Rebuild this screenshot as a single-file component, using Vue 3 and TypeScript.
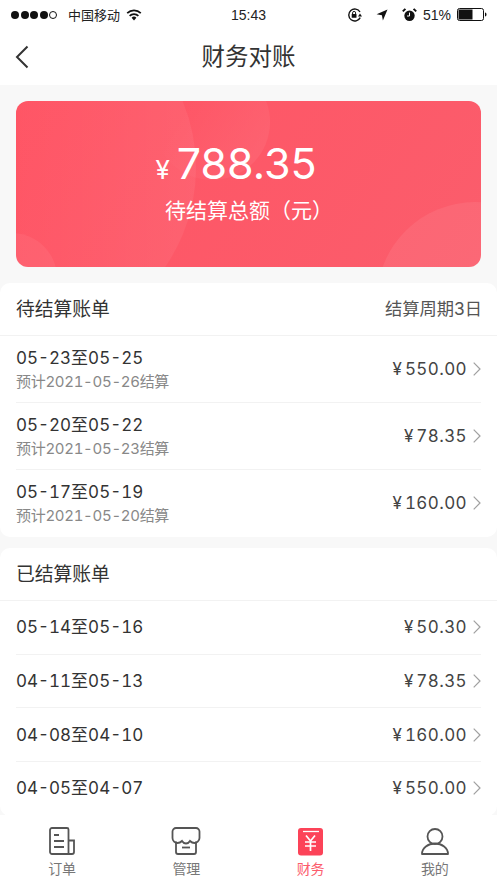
<script setup lang="ts">
interface Row { range: string; note?: string; amount: string }
const pending: Row[] = [
  { range: '05-23至05-25', note: '预计2021-05-26结算', amount: '550.00' },
  { range: '05-20至05-22', note: '预计2021-05-23结算', amount: '78.35' },
  { range: '05-17至05-19', note: '预计2021-05-20结算', amount: '160.00' },
]
const settled: Row[] = [
  { range: '05-14至05-16', amount: '50.30' },
  { range: '04-11至05-13', amount: '78.35' },
  { range: '04-08至04-10', amount: '160.00' },
  { range: '04-05至04-07', amount: '550.00' },
]
</script>

<template>
  <div class="page">
    <div class="status">
      <div class="status-left">
        <span class="dots"><i /><i /><i /><i /><i class="empty" /></span>
        <span class="carrier">中国移动</span>
        <svg class="wifi" width="16" height="12" viewBox="0 0 16 12">
          <path d="M8 11.5 5.6 8.8a3.4 3.4 0 0 1 4.8 0z" fill="#111" />
          <path d="M3.6 6.9a6.3 6.3 0 0 1 8.8 0M1.2 4.2a9.8 9.8 0 0 1 13.6 0" fill="none" stroke="#111" stroke-width="1.7" />
        </svg>
      </div>
      <span class="time">15:43</span>
      <div class="status-right">
        <svg width="16" height="14" viewBox="0 0 16 14">
          <path d="M13.2 9.6A6 6 0 1 1 13 4" fill="none" stroke="#111" stroke-width="1.4" />
          <path d="M11 5.6h4L13 8.4z" fill="#111" transform="rotate(180 13 7)" />
          <rect x="4.7" y="6" width="4.8" height="3.8" rx=".5" fill="#111" />
          <path d="M5.6 6V4.9a1.5 1.5 0 0 1 3 0V6" fill="none" stroke="#111" stroke-width="1" />
        </svg>
        <svg class="arrow" width="12" height="12" viewBox="0 0 12 12">
          <path d="M11.5.6 .6 5.2l5.3 1 1 5.2z" fill="#111" />
        </svg>
        <svg class="alarm" width="15" height="14" viewBox="0 0 15 14">
          <circle cx="7.5" cy="7.7" r="5.2" fill="#111" />
          <path d="M7.5 4.6v3.4H5" fill="none" stroke="#fff" stroke-width="1" />
          <path d="M.8 3.4 3.4.9 M14.2 3.4 11.6.9" stroke="#111" stroke-width="2" />
        </svg>
        <span class="pct">51%</span>
        <svg width="30" height="13" viewBox="0 0 30 13">
          <rect x=".5" y=".5" width="26" height="12" rx="2" fill="#fff" stroke="#111" />
          <rect x="1.5" y="1.5" width="14" height="10" fill="#111" />
          <path d="M28 4.600c1 .2 1.500.9 1.500 1.900s-.5 1.700-1.500 1.900z" fill="#111" />
        </svg>
      </div>
    </div>

    <header class="nav">
      <svg class="back" width="14" height="24" viewBox="0 0 14 24">
        <path d="M12.5 1.5 2 12l10.5 10.5" fill="none" stroke="#333" stroke-width="2" />
      </svg>
      <h1>财务对账</h1>
    </header>

    <main class="content">
      <section class="banner">
        <i class="blob blob-b" />
        <i class="blob blob-a" />
        <i class="blob blob-c" />
        <i class="blob blob-d" />
        <div class="total"><span class="yen">¥</span><span class="sum">788.35</span></div>
        <div class="caption">待结算总额（元）</div>
      </section>

      <section class="card pending">
        <div class="card-head">
          <span class="card-title">待结算账单</span>
          <span class="cycle">结算周期3日</span>
        </div>
        <div v-for="r in pending" :key="r.range" class="row tall">
          <div class="row-text">
            <div class="range">{{ r.range }}</div>
            <div class="note">{{ r.note }}</div>
          </div>
          <div class="amount">¥<span class="num">{{ r.amount }}</span></div>
          <svg class="chev" width="8" height="14" viewBox="0 0 8 14">
            <path d="M.7.7 7 7 .7 13.300" fill="none" stroke="#a0a0a0" stroke-width="1.200" />
          </svg>
        </div>
      </section>

      <section class="card settled">
        <div class="card-head">
          <span class="card-title">已结算账单</span>
        </div>
        <div v-for="r in settled" :key="r.range" class="row short">
          <div class="row-text">
            <div class="range">{{ r.range }}</div>
          </div>
          <div class="amount">¥<span class="num">{{ r.amount }}</span></div>
          <svg class="chev" width="8" height="14" viewBox="0 0 8 14">
            <path d="M.7.7 7 7 .7 13.300" fill="none" stroke="#a0a0a0" stroke-width="1.200" />
          </svg>
        </div>
      </section>
    </main>

    <nav class="tabs">
      <div class="tab">
        <svg width="30" height="30" viewBox="0 0 30 30">
          <path d="M22 27H5a2 2 0 0 1-2-2V3a2 2 0 0 1 2-2h15a1.500 1.500 0 0 1 1.500 1.500V26" fill="none" stroke="#555" stroke-width="1.800" />
          <path d="M22 13.500h5v11.500a2 2 0 0 1-2 2h-3" fill="none" stroke="#555" stroke-width="1.800" />
          <path d="M7 8h5M7 14h10M7 20h10" stroke="#555" stroke-width="1.800" />
        </svg>
        <span>订单</span>
      </div>
      <div class="tab">
        <svg width="30" height="30" viewBox="0 0 30 30">
          <path d="M5 1h20a3.500 3.500 0 0 1 3.500 3.500V11c0 3-3 5-5 5-2.500 0-4.500-2-4.500-2s-1.500 2.500-4 2.500S11 14 11 14s-2 2-4.500 2c-2.500 0-5-2-5-5V4.500A3.500 3.500 0 0 1 5 1z" fill="none" stroke="#555" stroke-width="1.800" />
          <path d="M5 14.500V25a2 2 0 0 0 2 2h16a2 2 0 0 0 2-2V14.500" fill="none" stroke="#555" stroke-width="1.800" />
          <path d="M11 20.500h8" stroke="#555" stroke-width="1.800" />
        </svg>
        <span>管理</span>
      </div>
      <div class="tab active">
        <svg width="30" height="30" viewBox="0 0 30 30">
          <rect x="2" y="1" width="25" height="27.500" rx="3" fill="#fc4358" />
          <path d="M7 4.500h16" stroke="#fff" stroke-width="1.300" />
          <path d="M10 8.500l4.500 5.500 4.500-5.500M9 15h11M9 19h11M14.500 14v10" fill="none" stroke="#fff" stroke-width="1.700" />
        </svg>
        <span>财务</span>
      </div>
      <div class="tab">
        <svg width="30" height="30" viewBox="0 0 30 30">
          <circle cx="15" cy="9.500" r="7.500" fill="none" stroke="#555" stroke-width="1.800" />
          <path d="M2 27c0-6 6-10.500 13-10.500S28 21 28 27z" fill="none" stroke="#555" stroke-width="1.800" stroke-linejoin="round" />
        </svg>
        <span>我的</span>
      </div>
    </nav>
  </div>
</template>

<style scoped>
.page {
  width: 497px;
  height: 883px;
  display: flex;
  flex-direction: column;
  overflow: hidden;
  background: #f8f8f8;
  color: #333;
  font-family: "Liberation Sans", "Noto Sans CJK SC", sans-serif;
}
.status {
  height: 29px;
  flex: none;
  background: #fff;
  display: flex;
  align-items: center;
  justify-content: space-between;
  padding: 0 10px 0 11px;
  position: relative;
  color: #222;
  font-size: 13px;
}
.status-left, .status-right { display: flex; align-items: center; }
.dots { display: flex; gap: 1.500px; margin-right: 11px; }
.dots i { width: 8px; height: 8px; border-radius: 50%; background: #111; }
.dots i.empty { background: #fff; border: 1px solid #111; box-sizing: border-box; }
.carrier { font-size: 13px; margin-right: 6px; }
.time { position: absolute; left: 0; right: 0; text-align: center; font-size: 14px; }
.status-right { position: relative; z-index: 1; }
.arrow { margin-left: 13px; }
.alarm { margin-left: 14px; }
.pct { margin: 0 6px 0 6px; font-size: 14px; }
.nav {
  height: 56px;
  flex: none;
  background: #fff;
  display: flex;
  align-items: center;
  justify-content: center;
  padding-bottom: 4px;
  box-sizing: border-box;
  position: relative;
}
.nav h1 { margin: 0; font-size: 23.500px; font-weight: 400; color: #333; }
.back { position: absolute; left: 15px; top: 16px; }
.content {
  flex: 1;
  min-height: 0;
  overflow: hidden;
  padding-top: 16px;
}
.banner {
  position: relative;
  overflow: hidden;
  height: 166px;
  margin: 0 16px;
  border-radius: 12px;
  background: linear-gradient(125deg, #ff5464, #fb5d6c);
  color: #fff;
  display: flex;
  flex-direction: column;
  align-items: center;
}
.blob { position: absolute; border-radius: 50%; }
.blob-a {
  left: -168px; top: -107px; width: 348px; height: 348px;
  background: linear-gradient(90deg, rgba(255,255,255,0) 40%, rgba(255,255,255,.06));
}
.blob-b {
  left: 138px; top: -37px; width: 116px; height: 116px;
  background: linear-gradient(120deg, rgba(255,255,255,0) 30%, rgba(255,255,255,.07));
}
.blob-c { left: 361px; top: 101px; width: 196px; height: 196px; background: rgba(255,255,255,.07); }
.blob-d { left: -49px; top: 132px; width: 90px; height: 90px; background: rgba(255,255,255,.06); }
.total {
  position: relative;
  display: flex;
  align-items: baseline;
  font-family: Inter, "Noto Sans CJK SC", sans-serif;
  margin: 32px 25px 0 0;
  height: 60px;
  line-height: 60px;
}
.yen { font-size: 26px; margin-right: 7px; }
.sum { font-size: 43px; }
.caption { position: relative; font-size: 21px; line-height: 30px; margin-top: 3px; margin-left: 1px; }
.card {
  background: #fff;
  border-radius: 10px;
  margin-top: 11px;
  padding: 0 16px;
  font-family: Inter, "Noto Sans CJK SC", sans-serif;
}
.pending { margin-top: 16px; }
.card-head {
  height: 53px;
  margin: 0 -16px;
  padding: 0 15px 4px 16px;
  display: flex;
  align-items: center;
  justify-content: space-between;
  border-bottom: 1px solid #f2f2f2;
  box-sizing: border-box;
}
.card-title { font-size: 18.800px; color: #333; }
.cycle { font-size: 17.300px; color: #555; }
.row {
  display: flex;
  align-items: center;
  border-bottom: 1px solid #f2f2f2;
  box-sizing: border-box;
}
.pending .row:last-child { border-bottom-color: transparent; }
.tall { height: 67px; padding-bottom: 1px; }
.short { height: 53.700px; }
.row-text { flex: 1; min-width: 0; }
.range {
  font-size: 17px;
  line-height: 22px;
  letter-spacing: 0;
  font-variant-numeric: tabular-nums;
  color: #333;
}
.tall .range { margin-bottom: 4px; }
.note {
  font-size: 15px;
  line-height: 18px;
  letter-spacing: -.3px;
  font-variant-numeric: tabular-nums;
  color: #888;
}
.amount { font-size: 17px; color: #444; margin-right: 6px; font-variant-numeric: tabular-nums; }
.num { margin-left: 3px; letter-spacing: .4px; }
.chev { flex: none; }
.tabs {
  height: 68px;
  flex: none;
  background: #fff;
  display: grid;
  grid-template-columns: repeat(4, 1fr);
  padding: 12px 0 0;
  box-sizing: border-box;
}
.tab {
  display: flex;
  flex-direction: column;
  align-items: center;
  font-size: 14px;
  line-height: 20px;
  color: #777;
}
.tab svg { display: block; margin-bottom: 2px; }
.tab.active { color: #fc5c6c; }
</style>

<style>
html, body { margin: 0; padding: 0; background: #fff; }
</style>
